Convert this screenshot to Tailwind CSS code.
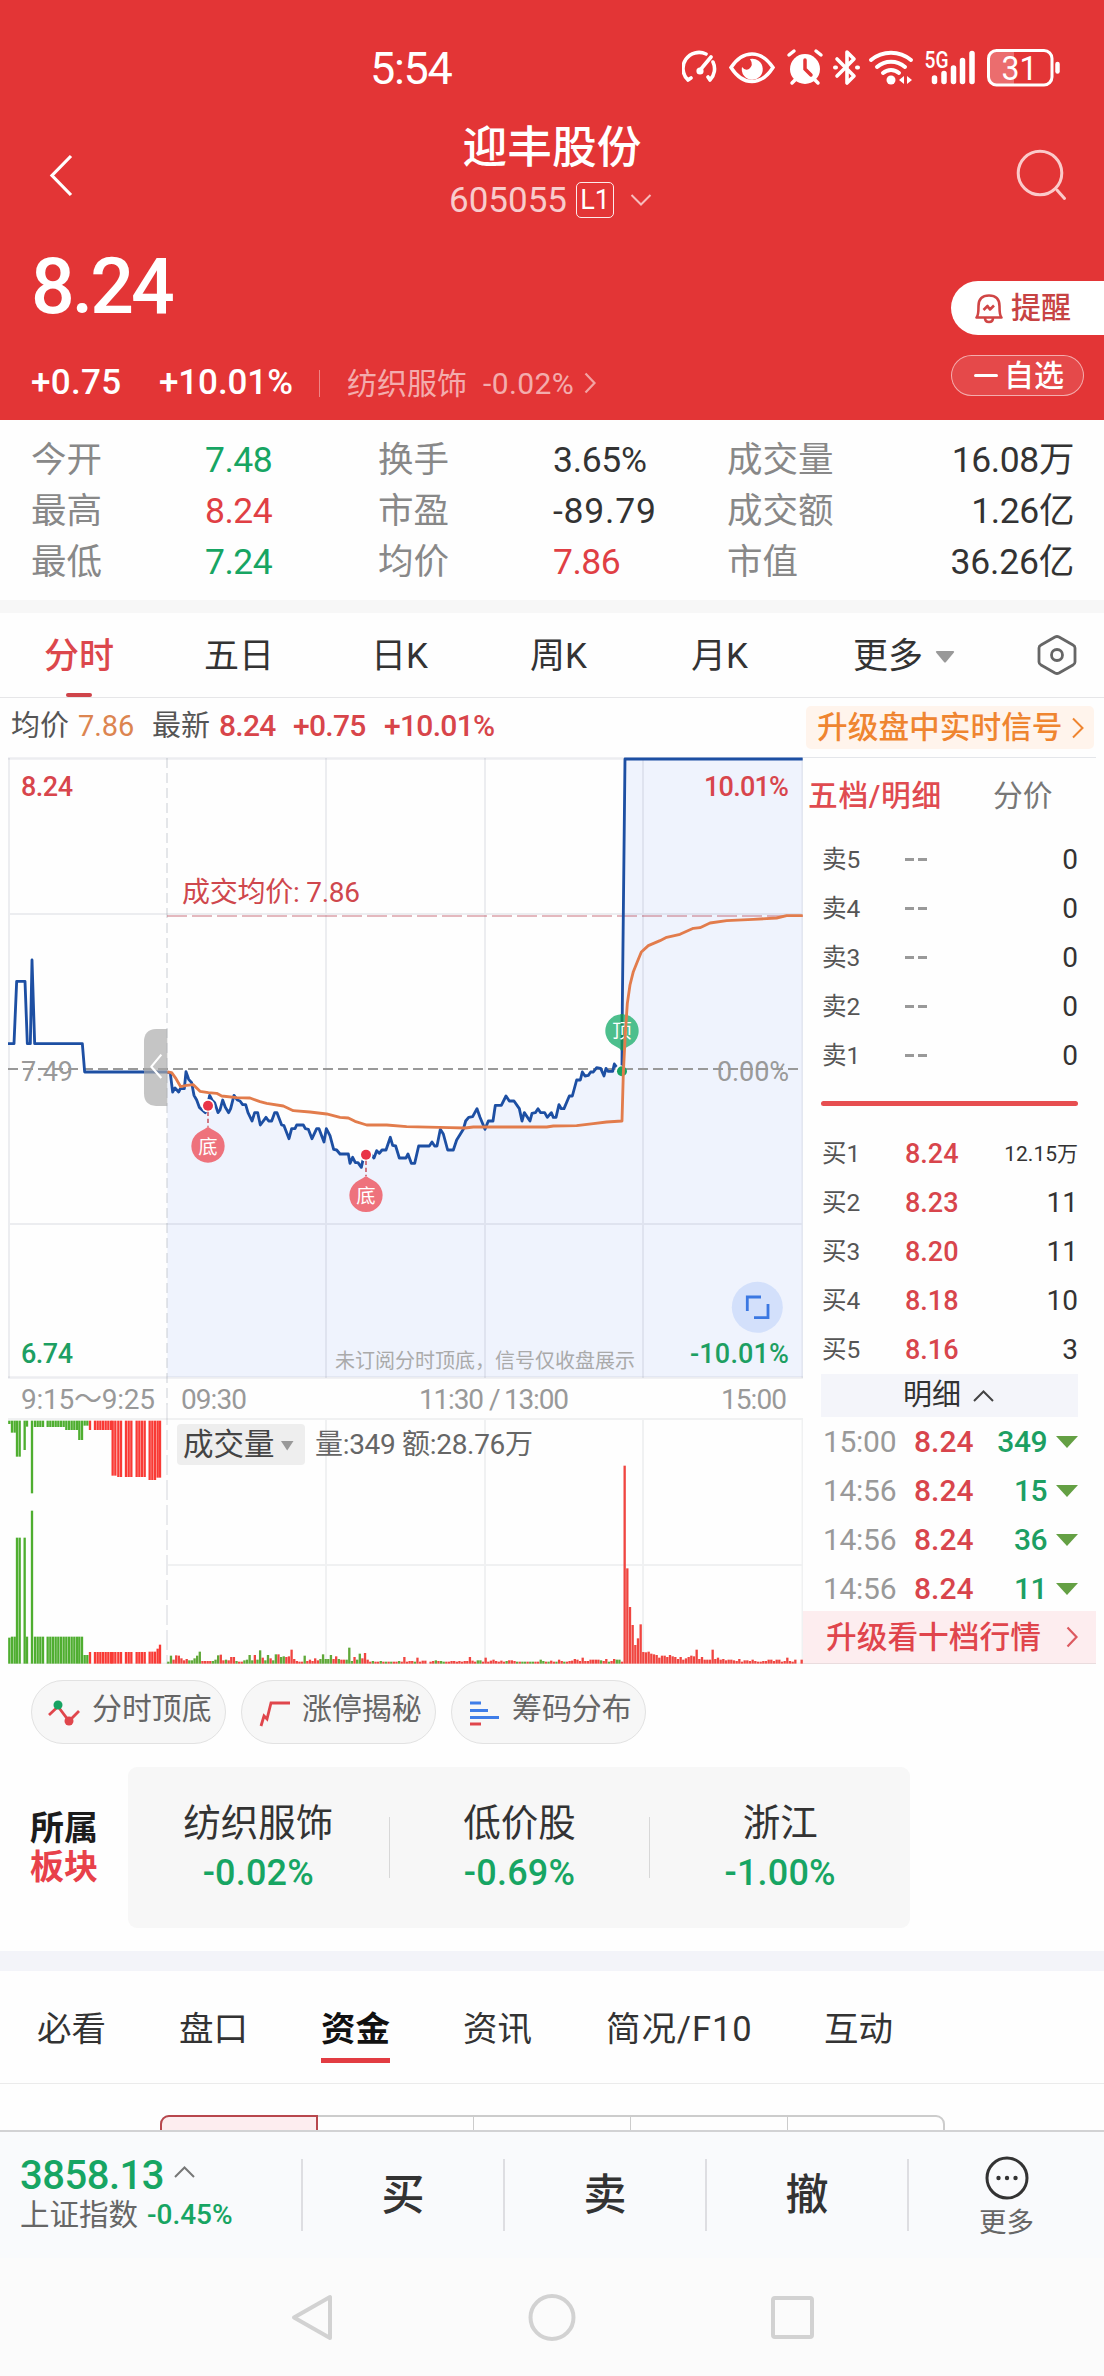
<!DOCTYPE html>
<html lang="zh-CN">
<head>
<meta charset="utf-8">
<title>迎丰股份 605055</title>
<script src="https://cdn.jsdelivr.net/npm/@tailwindcss/browser@4"></script>
</head>
<body class="bg-white">
<div class="w-[1104px] h-[2376px] overflow-hidden flex flex-col bg-[#fefefe] font-[Roboto,'Noto_Sans_CJK_SC',sans-serif] text-[#333] whitespace-nowrap">

<!-- header -->
<header class="h-[420px] shrink-0 bg-[#e33536] text-white flex flex-col">
  <div class="h-[100px] pt-[38px] flex items-center pl-[370px]">
    <div class="w-[312px] text-[45px] leading-[64px] tracking-[-1.300px]">5:54</div>
    <svg class="w-[380px] h-[40px] -mt-[2px]" viewBox="682 48 380 40" fill="none" stroke="#fff" stroke-width="4" stroke-linecap="round">
      <path d="M688 80A16 16 0 0 1 706 54M713 62A16 16 0 0 1 710 80M701 69L711 57M688 80l3-2M710 80l-2-3" stroke-width="3.6"/><circle cx="700" cy="71" r="3.6" fill="#fff" stroke="none"/>
      <path d="M731 67.500Q740 54 752 54T773 67.500Q764 81.500 752 81.500T731 67.500Z" stroke-width="3.500"/><path d="M750 59A10.500 10.500 0 1 1 742 67Q745 71 749 69Q754 65 750 59Z" fill="#fff" stroke="none"/>
      <circle cx="805" cy="69" r="15" fill="#fff" stroke="none"/><path d="M789 55l5-4M821 55l-5-4M795 80l-3 3M815 80l3 3" stroke-width="3.500"/><path d="M805 60v9l6 6" stroke="#e33536" stroke-width="3.500"/>
      <path d="M837 59l17 17-7 7V52l7 7-17 17" stroke-width="3.600" stroke-linejoin="round"/><path d="M835 67.500h1M857 67.500h1" stroke-width="4"/>
      <path d="M871 60A31 31 0 0 1 911 60M877 67A21 21 0 0 1 905 67M883 73A12 12 0 0 1 899 73" stroke-width="4"/><circle cx="891" cy="80" r="4.500" fill="#fff" stroke="none"/><path d="M904 76v8l-5-4zM907 76v8l5-4z" fill="#fff" stroke="none"/>
      <path d="M934.500 78v3.500M944 73.500v8M953.500 68v13.500M962.500 60.500v21M972 53.500v28" stroke-width="5.500"/>
      <text x="924.500" y="68" font-size="23" font-weight="500" fill="#fff" stroke="none" textLength="24" lengthAdjust="spacingAndGlyphs">5G</text>
      <path d="M996 51h18v33h-18q-7 0-7-7V58q0-7 7-7z" fill="#fff" fill-opacity=".28" stroke="none"/>
      <rect x="988.500" y="50.500" width="63.500" height="34.500" rx="8" stroke-width="3"/><path d="M1057.500 64v7.500" stroke-width="4.500"/>
      <text x="1001.500" y="79.500" font-size="33" fill="#fff" stroke="none" textLength="36" lengthAdjust="spacingAndGlyphs">31</text>
    </svg>
  </div>
  <div class="h-[124px] flex">
    <div class="w-[180px] pl-[46px] pt-[52px]"><svg class="w-[30px] h-[46px]" viewBox="0 0 30 46" fill="none" stroke="#fff" stroke-width="3.200"><path d="M25 4L6 23.500L25 43"/></svg></div>
    <div class="w-[744px] pt-[21px]">
      <div class="text-[44.700px] leading-[54px] font-medium text-center">迎丰股份</div>
      <div class="h-[49px] flex items-center pl-[269px]">
        <span class="w-[127px] text-[35px] leading-[49px] pt-px text-white/75">605055</span>
        <span class="w-[38px] h-[36px] border border-white/90 rounded-[5px] text-[27px] leading-[35px] text-center">L1</span>
        <svg class="ml-[16px] w-[22px] h-[14px]" viewBox="0 0 22 14" fill="none" stroke="#f7bcbc" stroke-width="2"><path d="M1.500 2L11 11.500L20.500 2"/></svg>
      </div>
    </div>
    <div class="w-[180px] pl-[90px] pt-[46px]"><svg class="w-[56px] h-[58px]" viewBox="1014 146 56 58" fill="none" stroke="#fbcaca" stroke-width="3" stroke-linecap="round"><circle cx="1040" cy="173" r="21.800"/><path d="M1057 190L1064.500 198.500"/></svg></div>
  </div>
  <div class="h-[124px] flex justify-between">
    <div class="pl-[31px] text-[77px] leading-[126px] tracking-[-3px] font-medium">8.24</div>
    <div class="mt-[57px] w-[153px] h-[54px] rounded-l-full bg-white flex items-center pl-[23px]">
      <svg class="w-[30px] h-[32px]" viewBox="0 0 30 32" fill="none" stroke="#d04545" stroke-width="2.600" stroke-linejoin="round"><path d="M2.500 25.500H27.500Q25.500 24 25.500 14Q25.500 3.500 15 3.500T4.500 14Q4.500 24 2.500 25.500ZM11 26q0 4 4 4t4-4"/><path d="M9.500 18l4-4 2.500 3.500 4-4"/></svg>
      <span class="ml-[7px] text-[30px] leading-[50px] font-medium text-[#c74343] pb-px">提醒</span>
    </div>
  </div>
  <div class="h-[72px] flex">
    <div class="h-[70px] flex items-center w-[951px] pl-[31px] text-[35px]">
      <span class="w-[128px] tracking-[0.300px] font-medium">+0.75</span>
      <span class="w-[160px] tracking-[-0.100px] font-medium">+10.01%</span>
      <span class="w-px h-[27px] bg-white/40"></span>
      <span class="ml-[27px] w-[136px] text-[30px] text-white/60">纺织服饰</span>
      <span class="w-[101px] text-[30px] tracking-[0.400px] text-white/60">-0.02%</span>
      <svg class="w-[13px] h-[22px]" viewBox="0 0 13 22" fill="none" stroke="#f2a3a3" stroke-width="2.200"><path d="M1.500 1.500L10.500 11L1.500 20.500"/></svg>
    </div>
    <div class="mt-[7px] w-[133px] h-[41px] rounded-full border border-white/55 bg-white/10 flex items-center pl-[22px]">
      <span class="w-[24px] h-[2.500px] bg-white rounded"></span><span class="ml-[6px] text-[30px] leading-[38px] font-medium">自选</span>
    </div>
  </div>
</header>

<!-- quote figures -->
<section class="h-[180px] shrink-0 pt-[15px] pl-[31px] pr-[30px] text-[35.500px] leading-[51px]">
  <div class="grid grid-cols-[174px_173px_175px_174px_1fr] text-[#888]">
    <span>今开</span><span class="text-[#17a563] tracking-[-0.500px]">7.48</span><span>换手</span><span class="text-[#333] tracking-[-0.300px]">3.65%</span><div class="flex justify-between"><span>成交量</span><span class="text-[#333] tracking-[-0.400px]">16.08万</span></div>
    <span>最高</span><span class="text-[#e03f44] tracking-[-0.500px]">8.24</span><span>市盈</span><span class="text-[#333] tracking-[0.800px]">-89.79</span><div class="flex justify-between"><span>成交额</span><span class="text-[#333] tracking-[-0.400px]">1.26亿</span></div>
    <span>最低</span><span class="text-[#17a563] tracking-[-0.500px]">7.24</span><span>均价</span><span class="text-[#e03f44] tracking-[-0.500px]">7.86</span><div class="flex justify-between"><span>市值</span><span class="text-[#333] tracking-[-0.200px]">36.26亿</span></div>
  </div>
</section>
<div class="h-[13px] shrink-0 bg-[#f7f7f7]"></div>

<!-- period tabs -->
<nav class="h-[85px] shrink-0 border-b border-[#e6e6e8] flex text-[35px] leading-[87px] pl-[44px]">
  <div class="w-[160px] flex flex-col text-[#dc474c] font-medium"><span class="h-[80px]">分时</span><span class="ml-[22px] w-[26px] h-[4px] rounded-sm bg-[#cf444a]"></span></div>
  <span class="w-[167px]">五日</span><span class="w-[159px]">日K</span><span class="w-[161px]">周K</span><span class="w-[162px]">月K</span><span class="w-[82px]">更多</span>
  <svg class="mt-[38px] w-[20px] h-[12px]" viewBox="0 0 20 12" fill="#999"><path d="M2 0H18Q20 0 18.500 2L11 11Q10 12 9 11L1.500 2Q0 0 2 0Z"/></svg>
  <svg class="ml-[82px] mt-[20px] w-[42px] h-[44px]" viewBox="0 0 42 44" fill="none" stroke="#666" stroke-width="2.800" stroke-linejoin="round"><path d="M18 4Q20 3 22 4L36 12Q38 13 38 15V29Q38 31 36 32L22 40Q20 41 18 40L4 32Q2 31 2 29V15Q2 13 4 12Z"/><circle cx="20" cy="22" r="5.500"/></svg>
</nav>

<div class="h-[52px] shrink-0 flex text-[29px] leading-[56px] pl-[11px] text-[#555]">
  <span class="w-[67px]">均价</span><span class="w-[74px] text-[#dc8550] tracking-[-0.100px]">7.86</span><span class="w-[67px]">最新</span>
  <div class="flex w-[587px] text-[30px] text-[#d8454a] font-medium tracking-[-0.700px]"><span class="w-[74px]">8.24</span><span class="w-[91px]">+0.75</span><span>+10.01%</span></div>
  <div class="mt-[8px] w-[288px] h-[43px] rounded-[5px] bg-[#fff4ec] flex items-center pl-[11px] text-[30.700px] leading-[43px] text-[#ef8530]">
    <span class="w-[255px] font-medium">升级盘中实时信号</span>
    <svg class="w-[12px] h-[22px]" viewBox="0 0 12 22" fill="none" stroke="#ef8530" stroke-width="2"><path d="M1 1.500L10.500 11L1 20.500"/></svg>
  </div>
</div>

<!-- chart + order book -->
<main class="h-[914px] shrink-0 flex">
<svg class="w-[803px] h-[914px] shrink-0" viewBox="0 750 803 914" fill="none" font-size="27">
  <path id="area" fill="#eff3fd"/>
  <g stroke="#8890a0" stroke-opacity=".15" stroke-width="2">
    <path d="M8 758.500H803M8 1377.500H803" stroke-width="2.500"/><path d="M9 758V1378M802.500 758V1378M8 914H803M8 1224H803M326 758V1378M485 758V1378M643 758V1378"/>
    <path d="M8 1419H803M168 1565H803M326 1419V1664M485 1419V1664M643 1419V1664M802.500 1419V1664M8 1663.500H803" stroke-opacity=".12"/>
    <path d="M167 758V1405" stroke-dasharray="10 5" stroke-opacity=".22"/><path d="M167 1405V1664" stroke-dasharray="20 5" stroke-opacity=".18"/>
  </g>
  <path d="M167 916H803" stroke="#b02a3c" stroke-opacity=".33" stroke-width="2" stroke-dasharray="20 5"/>
  <path d="M8 1069H803" stroke="#999" stroke-width="2" stroke-dasharray="10 5"/>
  <text x="182" y="902" fill="#cf474d" font-size="28" textLength="178">成交均价: 7.86</text>
  <text x="21" y="1081" fill="#999" textLength="52">7.49</text>
  <text x="717" y="1081" fill="#999" textLength="72">0.00%</text>
  <g transform="translate(0 740) scale(.33333)" stroke-width="8.500" stroke-linejoin="round">
    <path stroke="#1d4fa3" d="M24 911H42L50 724H75L82 911H91L96 660L104 911H247L254 996H502"/>
    <path id="price" stroke="#1d4fa3" d="M502 996L511 1000 518 1056 525 1044 536 1056 541 1046 553 1046 558 995 566 1018 575 1028 582 1066 590 1080 598 1102 616 1118 622 1100 629 1066 636 1080 644 1088 654 1118 660 1110 668 1080 676 1102 686 1118 692 1106 702 1066 712 1080 720 1083 728 1094 737 1094 744 1118 756 1143 764 1118 773 1118 781 1155 798 1132 806 1143 815 1143 824 1118 831 1118 845 1155 852 1157 867 1196 875 1166 885 1166 890 1155 910 1155 916 1166 925 1168 936 1196 950 1166 957 1166 972 1206 979 1166 990 1187 1001 1228 1010 1230 1020 1242 1045 1242 1050 1270 1058 1252 1066 1268 1074 1268 1084 1282 1090 1255 1098 1244 1110 1240 1122 1254 1130 1232 1138 1240 1146 1230 1158 1230 1171 1192 1178 1216 1187 1218 1198 1254 1218 1254 1224 1242 1234 1270 1244 1270 1256 1218 1288 1218 1296 1206 1304 1218 1311 1218 1321 1168 1330 1182 1343 1230 1360 1230 1370 1200 1390 1168 1397 1143 1406 1132 1418 1130 1431 1106 1440 1132 1455 1168 1465 1143 1479 1143 1486 1096 1504 1096 1518 1068 1528 1083 1542 1083 1558 1106 1566 1143 1573 1118 1590 1143 1596 1120 1606 1118 1614 1106 1622 1118 1634 1118 1642 1132 1654 1118 1660 1132 1668 1132 1677 1094 1684 1106 1692 1106 1708 1068 1717 1068 1730 1020 1741 1020 1747 996 1755 1008 1765 1006 1772 996 1780 996 1790 983 1802 985 1812 1008 1818 985 1824 994 1838 994 1843 972 1852 984 1866 990 1867 800 1875 57 2408 57"/>
    <g fill="#fff" stroke="none"><circle cx="624" cy="1097" r="20"/><circle cx="1098" cy="1244" r="20"/><circle cx="1860" cy="990" r="14"/></g>
    <g stroke="#c9606b" stroke-width="5" stroke-dasharray="13 8"><path d="M624 1115V1160M1098 1262V1308"/></g>
    <g fill="#e93547" stroke="none"><circle cx="624" cy="1097" r="15"/><circle cx="1098" cy="1244" r="15"/></g>
    <circle cx="1866" cy="994" r="15" fill="#17a362"/>
    <g fill="#ee727c"><path d="M624 1160Q632 1166 645 1173A50 50 0 1 1 603 1173Q616 1166 624 1160Z"/><path d="M1098 1308Q1106 1314 1119 1321A50 50 0 1 1 1077 1321Q1090 1314 1098 1308Z"/></g>
    <path d="M1866 931Q1858 925 1845 918A50 50 0 1 1 1887 918Q1874 925 1866 931Z" fill="#4dbf8d"/>
    <path d="M1866 931V822" stroke="#19885f"/>
    <g fill="#fff" font-size="58" text-anchor="middle"><text x="624" y="1241">底</text><text x="1098" y="1389">底</text><text x="1866" y="893">顶</text></g>
    <path stroke="#e27c4c" d="M502 996L515 998 528 1016 542 1040 560 1036 580 1034 600 1054 625 1058 650 1060 665 1068 710 1073 750 1074 780 1085 800 1090 850 1098 880 1112 930 1116 980 1122 1020 1132 1045 1134 1065 1144 1100 1155 1160 1155 1220 1160 1350 1163 1395 1164 1420 1161 1640 1161 1660 1158 1730 1157 1780 1151 1820 1146 1866 1143 1870 1000 1876 880 1882 790 1890 735 1900 695 1912 665 1924 636 1945 617 1980 602 2000 592 2040 583 2080 565 2100 563 2130 549 2180 542 2260 538 2330 534 2360 527 2408 527"/>
    <path d="M502 867H468Q432 869 432 905V1060Q432 1096 468 1098H502Z" fill="#aaa" fill-opacity=".68"/>
    <path d="M484 944L454 980L484 1014" stroke="#fff" stroke-width="6.500"/>
  </g>
  <g font-weight="500">
    <text x="21" y="796" fill="#d8454c" textLength="52">8.24</text><text x="704" y="796" fill="#d8454c" textLength="85">10.01%</text>
    <text x="21" y="1362.500" fill="#1d9f62" textLength="52">6.74</text><text x="690" y="1362.500" fill="#1d9f62" textLength="99">-10.01%</text>
  </g>
  <text x="335" y="1368" font-size="20" fill="#aaa" textLength="300">未订阅分时顶底，信号仅收盘展示</text>
  <circle cx="757.300" cy="1307.300" r="25.500" fill="#d3e0fb"/><path d="M747.300 1311V1297H761M768 1304V1317.700H754" stroke="#3b78e2" stroke-width="2.800"/>
  <g fill="#999" font-size="28"><text x="21" y="1409" textLength="134">9:15～9:25</text><text x="181" y="1409" textLength="66">09:30</text><text x="419" y="1409" textLength="65">11:30</text><text x="489" y="1409">/</text><text x="504" y="1409" textLength="65">13:00</text><text x="721" y="1409" textLength="66">15:00</text></g>
  <rect x="177" y="1424" width="128" height="41" rx="4" fill="#eee"/>
  <text x="183" y="1455" font-size="30.500" fill="#444">成交量</text><path d="M281 1441H293.500L287.200 1450.500Z" fill="#999"/>
  <text x="315" y="1454" font-size="28" fill="#666" textLength="218">量:349 额:28.76万</text>
  <g transform="translate(0 1190) scale(.33333)" stroke-width="7">
    <g id="pre"></g><g id="vol"></g>
  </g>
</svg>

<aside class="w-[293px] shrink-0 mt-[7px] h-[907px] border-t border-[#e4e6ea] flex flex-col text-[#333]">
  <div class="h-[77px] shrink-0 flex text-[29.700px] leading-[76px] pl-[5px]"><span class="w-[185px] tracking-[0.700px] text-[#e04b50] font-medium">五档/明细</span><span class="text-[#777]">分价</span></div>
  <div id="asks" class="flex flex-col"></div>
  <div class="ml-[18px] mt-[21px] w-[257px] h-[5px] rounded-full bg-[#e74e50] shrink-0"></div>
  <div id="bids" class="mt-[23px] flex flex-col"></div>
  <div class="ml-[18px] w-[257px] h-[43px] shrink-0 bg-[#f4f5fa] flex items-center pl-[82px] text-[29px] leading-[43px]">明细
    <svg class="ml-[12px] w-[21px] h-[12px]" viewBox="0 0 21 12" fill="none" stroke="#444" stroke-width="2"><path d="M1 11L10.500 1.500L20 11"/></svg></div>
  <div id="trades" class="h-[194px] shrink-0 flex flex-col"></div>
  <div class="h-[53px] shrink-0 bg-[#fdedef] border-b border-[#eadcde] flex items-center pl-[23px] text-[30.700px] leading-[51px] text-[#e0454c]"><span class="w-[240px] font-medium">升级看十档行情</span>
    <svg class="w-[13px] h-[22px]" viewBox="0 0 13 22" fill="none" stroke="#dc5a60" stroke-width="2.200"><path d="M1.500 1.500L10.500 11L1.500 20.500"/></svg></div>
</aside>
</main>

<!-- shortcuts -->
<section class="h-[103px] shrink-0 flex gap-[15px] pt-[16px] pl-[31px] text-[29.900px] leading-[55px] text-[#666]">
  <div class="w-[195px] h-[64px] rounded-full border border-[#e2e2e2] bg-[#f7f7f7] flex pl-[15px]">
    <svg class="mt-[17px] mr-[11px] w-[34px] h-[30px]" viewBox="0 0 34 30" fill="none" stroke="#e0464c" stroke-width="2.800"><path d="M2 17L11 8.500L22 23L32 13"/><circle cx="11" cy="7" r="4.500" fill="#17a362" stroke="none"/><circle cx="22" cy="23" r="4.500" fill="#e0464c" stroke="none"/></svg>分时顶底</div>
  <div class="w-[195px] h-[64px] rounded-full border border-[#e2e2e2] bg-[#f7f7f7] flex pl-[15px]">
    <svg class="mt-[17px] mr-[11px] w-[34px] h-[30px]" viewBox="0 0 34 30" fill="none" stroke="#e0464c" stroke-width="2.800"><path d="M4 28L7 18L10 21L14 5H33"/></svg>涨停揭秘</div>
  <div class="w-[195px] h-[64px] rounded-full border border-[#e2e2e2] bg-[#f7f7f7] flex pl-[15px]">
    <svg class="mt-[17px] mr-[11px] w-[34px] h-[30px]" viewBox="0 0 34 30" fill="none" stroke="#3f7de8" stroke-width="3"><path d="M3 5H14M3 12.500H21M3 19.500H32"/><path d="M3 26H14" stroke="#e0464c"/></svg>筹码分布</div>
</section>

<section class="h-[184px] shrink-0 flex pl-[30px]">
  <div class="w-[98px] pt-[42px] text-[34px] leading-[39px] font-bold text-[#1c1c1c]"><div>所属</div><div class="text-[#e8414a]">板块</div></div>
  <div class="w-[782px] h-[161px] rounded-[9px] bg-[#f7f7f7] grid grid-cols-3 text-center text-[37.500px]">
    <div class="pt-[31px] leading-[50px]"><div>纺织服饰</div><div class="text-[#17a563] text-[36px] leading-[50px] tracking-[0.200px] font-medium">-0.02%</div></div>
    <div class="pt-[31px] leading-[50px] flex"><span class="w-px h-[61px] mt-[19px] bg-[#d8d8d8]"></span><div class="flex-1"><div>低价股</div><div class="text-[#17a563] text-[36px] leading-[50px] tracking-[0.200px] font-medium">-0.69%</div></div></div>
    <div class="pt-[31px] leading-[50px] flex"><span class="w-px h-[61px] mt-[19px] bg-[#d8d8d8]"></span><div class="flex-1"><div>浙江</div><div class="text-[#17a563] text-[36px] leading-[50px] tracking-[0.200px] font-medium">-1.00%</div></div></div>
  </div>
</section>
<div class="h-[20px] shrink-0 bg-[#f3f4f9]"></div>

<nav class="h-[113px] shrink-0 border-b border-[#ebebeb] flex pl-[37px] text-[34.500px] leading-[89px] pt-[14px]">
  <span class="w-[142px]">必看</span><span class="w-[142px]">盘口</span><div class="w-[142px] font-bold text-[#111] flex flex-col"><span class="h-[73px]">资金</span><span class="w-[69px] h-[5px] bg-[#e23c42]"></span></div><span class="w-[143px]">资讯</span><span class="w-[218px] tracking-[0.900px]">简况/F10</span><span>互动</span>
</nav>
<div class="h-[46px] shrink-0 overflow-hidden pt-[31px] pl-[160px]">
  <div class="w-[785px] h-[50px] rounded-[9px] border-2 border-[#ccc] flex">
    <span class="-m-[2px] w-[158px] border-2 border-[#b8474d] rounded-l-[9px] bg-[#fdedef]"></span><span class="ml-[2px] w-[156px] border-r border-[#ccc]"></span><span class="w-[157px] border-r border-[#ccc]"></span><span class="w-[157px] border-r border-[#ccc]"></span>
  </div>
</div>

<!-- trade bar -->
<footer class="h-[128px] shrink-0 border-t-2 border-[#d2d2d4] bg-[#f9fafc] flex">
  <div class="w-[301px] shrink-0 pl-[20px] pt-[18px]">
    <div class="h-[52px] flex items-center text-[40px] leading-[52px] font-medium text-[#17a563]"><span class="w-[154px] tracking-[-0.500px]">3858.13</span><svg class="w-[21px] h-[12px] mb-[8px]" viewBox="0 0 21 12" fill="none" stroke="#777" stroke-width="2"><path d="M1 11L10.500 1.500L20 11"/></svg></div>
    <div class="h-[26px] flex items-center text-[29.500px] leading-[26px] text-[#666]"><span class="w-[127px]">上证指数</span><span class="text-[28px] text-[#17a563] font-medium">-0.45%</span></div>
  </div>
  <div class="mt-[27px] h-[72px] grid grid-cols-[202px_202px_202px_197px] grid-rows-[72px] text-[43px] leading-[72px] font-medium text-center">
    <span class="border-l-2 border-[#dedee2]">买</span><span class="border-l-2 border-[#dedee2]">卖</span><span class="border-l-2 border-[#dedee2]">撤</span>
    <div class="border-l-2 border-[#dedee2] flex flex-col items-center">
      <svg class="-mt-[3px] w-[44px] h-[44px] shrink-0" viewBox="0 0 44 44" fill="none" stroke="#333" stroke-width="3"><circle cx="22" cy="22" r="20"/><g fill="#333" stroke="none"><circle cx="13.500" cy="22" r="2.200"/><circle cx="22" cy="22" r="2.200"/><circle cx="30.500" cy="22" r="2.200"/></g></svg>
      <span class="mt-[3px] text-[27.500px] leading-[40px] font-normal text-[#666]">更多</span></div>
  </div>
</footer>
<div class="flex-1 bg-[#fbfbfb] flex items-start pl-[289px] pt-[33px]">
  <svg class="w-[526px] h-[54px]" viewBox="289 2291 526 54" fill="none" stroke="#d2d2d2" stroke-width="4" stroke-linejoin="round"><path d="M330 2297V2338L294 2317.500Z"/><circle cx="552" cy="2317.500" r="21.500"/><rect x="773" y="2298" width="39" height="39" rx="2"/></svg>
</div>
</div>

<script>
// order book
const level = (name, price, qty) => `<div class="h-[49px] flex items-center pl-[19px] pr-[18px] leading-[50px]">
  <span class="w-[83px] text-[24.500px] text-[#555]">${name}</span>
  ${price ? `<span class="text-[27px] font-medium text-[#d8454c]">${price}</span>` : `<span class="flex gap-[4px]"><i class="w-[9px] h-[2.500px] bg-[#999]"></i><i class="w-[9px] h-[2.500px] bg-[#999]"></i></span>`}
  <span class="ml-auto ${qty.length > 4 ? 'text-[21px]' : 'text-[28px]'} text-[#333]">${qty}</span></div>`;
asks.innerHTML = [5,4,3,2,1].map(n => level('卖' + n, '', '0')).join('');
bids.innerHTML = [['8.24','12.15万'],['8.23','11'],['8.20','11'],['8.18','10'],['8.16','3']].map((r, i) => level('买' + (i + 1), r[0], r[1])).join('');
trades.innerHTML = [['15:00','349'],['14:56','15'],['14:56','36'],['14:56','11']].map(r => `<div class="h-[49px] shrink-0 flex items-center pl-[20px] pr-[18px] text-[30px] leading-[49px]">
  <span class="w-[91px] text-[#999] tracking-[-0.300px]">${r[0]}</span><span class="text-[#d8454c] font-medium">8.24</span>
  <span class="ml-auto text-[#1d9f62] font-medium tracking-[-0.500px]">${r[1]}</span><svg class="ml-[9px] w-[22px] h-[12px]" viewBox="0 0 22 12" fill="#64a044"><path d="M0 0H22L11 12Z"/></svg></div>`).join('');

// shaded area below the price line
area.setAttribute('d', price.getAttribute('d') + ' L2408 1911 502 1911Z');
area.setAttribute('transform', 'translate(0 740) scale(.33333)');

// call auction bars: [first x, last x, hanging end, standing top, colour]
const G = '#4fae30', R = '#f93a35';
const bar = (x, a, b, c) => `<path d="M${x} ${a}V${b}" stroke="${c}"/>`;
let out = '';
[[28,28,702,1343,G],[36,43,728,1340,G],[51,58,800,1043,G],[74,74,780,1043,G],[81,81,710,1340,G],[96,96,910,962,G],[105,129,711,1340,G],[143,191,711,1340,G],[199,231,720,1340,G],[238,246,750,1340,G],[254,262,707,1395,G],
[270,270,720,1386,R],[285,333,720,1386,R],[338,346,857,1386,R],[355,363,861,1386,R],[378,396,861,1386,R],[410,435,861,1386,R],[449,466,870,1385,R],[473,473,863,1376,R],[480,480,863,1364,R]].forEach(([a, b, h, s, c]) => {
  for (let x = a; x <= b + 1; x += 8) out += bar(x, 692, h, c) + bar(x, s, 1421, c);
});
pre.innerHTML = out;

// minute volume
const v = 'g6 g24 r12 r25 r24 r16 r10 r14 g10 g10 g16 g24 g36 r8 r8 r8 r8 g8 g12 g25 r27 r10 g12 r10 r20 r20 g8 r6 r6 g10 g12 g26 g10 r26 g12 g40 r18 g10 g26 r16 g10 g28 r28 g20 g22 r20 r22 r42 r14 r8 r6 r6 g24 r8 r12 r8 r16 r10 g14 g28 g14 g14 g26 r14 r22 g14 r12 r12 g12 g48 g8 r20 g12 g30 r16 r32 r12 r6 g8 r6 r6 g8 r6 g6 r6 g6 r6 r6 g8 r6 r20 r6 r8 r8 g6 r18 r6 r9 r9 g0 r6 r8 g10 r8 g8 g6 r6 r6 r8 r8 r6 r8 r6 r8 r8 r20 r9 r6 g10 g10 r6 r18 r6 r9 r12 r8 r6 r9 r6 g8 r10 r10 r8 g6 r6 g6 g6 r6 g6 g6 r6 r6 g12 g8 r6 g6 r9 r6 g6 r12 r8 g6 r6 r8 r9 r14 r12 r8 r18 r8 r8 r12 r12 r12 r12 g10 r8 r14 g6 r8 r14 g12 g12 r6 r594 r286 r170 r116 r56 r76 r118 r35 r34 r36 r30 r28 r26 r18 r24 r24 r20 r26 r22 r20 r14 r20 r12 r16 r20 r24 r22 r42 r14 r20 r12 r12 r12 r42 r14 r18 r12 r14 r10 r12 r12 r10 r8 r14 r6 r10 r10 r8 r12 r8 r6 r6 r8 r8 r12 r12 r8 r12 r12 r6 r8 r18 r8 r6 r12 r12 r8 r6'.split(' ');
const spike = v.indexOf('r594');
vol.innerHTML = v.map((s, i) => {
  const x = i <= spike ? 505 + i * (1369 / spike) : 1874 + (i - spike) * 8;
  return x > 2386 ? '' : bar(x.toFixed(1), 1421 - s.slice(1), 1421, s[0] === 'g' ? '#5fa838' : '#f04540');
}).join('') + bar(2405, 1409, 1421, '#f04540');
</script>
</body>
</html>
